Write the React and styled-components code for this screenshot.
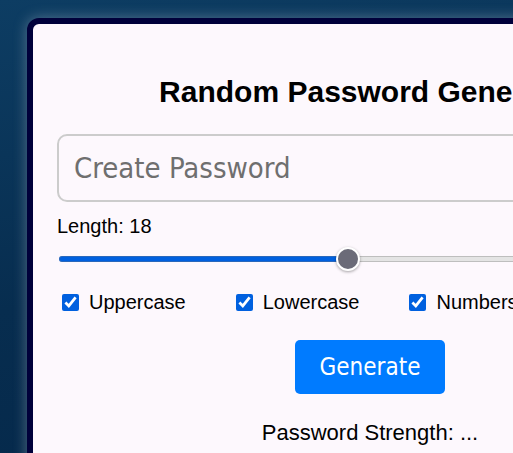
import React, { useState } from 'react'
import styled, { createGlobalStyle } from 'styled-components'

const GlobalStyle = createGlobalStyle`
  html, body {
    margin: 0;
    padding: 0;
    overflow: hidden;
  }
  body {
    min-height: 453px;
    background: linear-gradient(170deg, #0d3d63 0%, #072d4f 55%, #05284a 100%);
    font-family: "Liberation Sans", Arial, sans-serif;
  }
`

const Page = styled.div`
  padding: 18px 0 0 27px;
`

const Card = styled.div`
  width: 626px;
  background: #fdf8fd;
  border: 6px solid #00003a;
  border-radius: 12px;
  padding: 0 24px 24px;
  box-shadow: 0 0 14px rgba(170, 185, 200, 0.45);
  display: flex;
  flex-direction: column;
  box-sizing: content-box;
`

const Title = styled.h1`
  margin: 51px 0 25px;
  font-size: 30px;
  font-weight: bold;
  text-align: center;
  color: #000;
`

const PasswordInput = styled.input`
  box-sizing: border-box;
  height: 68px;
  width: 100%;
  border: 2px solid #cccccc;
  border-radius: 10px;
  background: #fdf8fd;
  padding: 0 15px;
  font-family: Tahoma, "DejaVu Sans Condensed", "Liberation Sans", sans-serif;
  font-size: 29px;
  color: #333;
  outline: none;
  &::placeholder {
    color: #6f6f6f;
  }
`

const Label = styled.div`
  margin-top: 13px;
  font-size: 20px;
  color: #000;
`

const Slider = styled.input`
  -webkit-appearance: none;
  appearance: none;
  margin: 9px 0 0 2px;
  width: calc(100% - 2px);
  height: 24px;
  background: transparent;
  &::-webkit-slider-runnable-track {
    height: 6px;
    border-radius: 3px;
    background: ${p => `linear-gradient(to right, #0060df ${p.$fill}%, #e4e4e4 ${p.$fill}%)`};
    box-shadow: inset 0 0 0 1px rgba(120, 120, 120, 0.35);
  }
  &::-webkit-slider-thumb {
    -webkit-appearance: none;
    width: 24px;
    height: 24px;
    margin-top: -9px;
    border-radius: 50%;
    background: #6b6b78;
    border: 2px solid #fff;
    box-sizing: border-box;
    box-shadow: 0 1px 3px rgba(0, 0, 0, 0.35);
  }
`

const Options = styled.div`
  display: flex;
  gap: 50px;
  margin-top: 20px;
  padding-left: 5px;
`

const Option = styled.label`
  display: flex;
  align-items: center;
  font-size: 20px;
  color: #000;
  white-space: nowrap;
`

const Check = styled.input`
  width: 17px;
  height: 17px;
  margin: 0 10px 0 0;
  accent-color: #0060df;
`

const Button = styled.button`
  align-self: center;
  margin-top: 26px;
  width: 150px;
  height: 54px;
  border: none;
  border-radius: 5px;
  background: #007bff;
  color: #fff;
  font-family: Tahoma, "DejaVu Sans Condensed", "Liberation Sans", sans-serif;
  font-size: 24px;
  cursor: pointer;
`

const Strength = styled.div`
  margin-top: 26px;
  text-align: center;
  font-size: 22px;
  color: #000;
`

const MIN = 6
const MAX = 32

export default function App () {
  const [length, setLength] = useState(18)
  const [opts, setOpts] = useState({ Uppercase: true, Lowercase: true, Numbers: true, Symbols: true })
  const fill = ((length - MIN) / (MAX - MIN)) * 100

  return (
    <Page>
      <GlobalStyle />
      <Card>
        <Title>Random Password Generator</Title>
        <PasswordInput placeholder="Create Password" />
        <Label>Length: {length}</Label>
        <Slider
          type="range"
          min={MIN}
          max={MAX}
          value={length}
          $fill={fill}
          onChange={e => setLength(Number(e.target.value))}
        />
        <Options>
          {Object.keys(opts).map(name => (
            <Option key={name}>
              <Check
                type="checkbox"
                checked={opts[name]}
                onChange={() => setOpts({ ...opts, [name]: !opts[name] })}
              />
              {name}
            </Option>
          ))}
        </Options>
        <Button>Generate</Button>
        <Strength>Password Strength: ...</Strength>
      </Card>
    </Page>
  )
}
